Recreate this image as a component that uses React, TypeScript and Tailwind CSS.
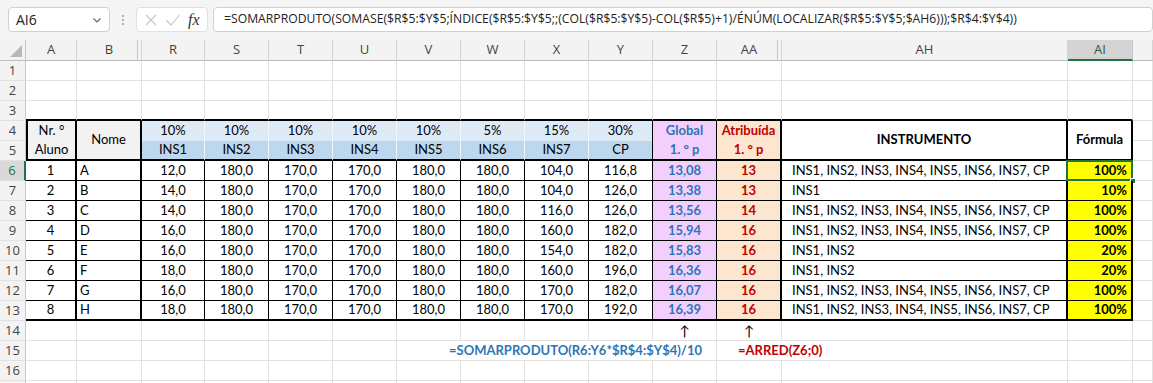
import React from 'react'
import clsx from 'clsx'

type Bd = 'g' | 't' | 'T' | 'n' | 'l'

const RB: Record<Bd, string> = {
  g: 'border-r border-r-[#e1e1e1]',
  t: 'border-r border-r-black',
  T: 'border-r-2 border-r-black',
  n: '',
  l: 'border-r border-r-[#f2f6fb]',
}
const BB: Record<Bd, string> = {
  g: 'border-b border-b-[#e1e1e1]',
  t: 'border-b border-b-black',
  T: 'border-b-2 border-b-black',
  n: '',
  l: '',
}

const ALL = 'INS1, INS2, INS3, INS4, INS5, INS6, INS7, CP'
const PCT = ['10%', '10%', '10%', '10%', '10%', '5%', '15%', '30%']
const INS = ['INS1', 'INS2', 'INS3', 'INS4', 'INS5', 'INS6', 'INS7', 'CP']
const HEADS = ['A', 'B', 'R', 'S', 'T', 'U', 'V', 'W', 'X', 'Y', 'Z', 'AA', 'AH', 'AI', '']

const DATA: [number, string, string[], string, string, string, string][] = [
  [1, 'A', ['12,0', '180,0', '170,0', '170,0', '180,0', '180,0', '104,0', '116,8'], '13,08', '13', ALL, '100%'],
  [2, 'B', ['14,0', '180,0', '170,0', '170,0', '180,0', '180,0', '104,0', '126,0'], '13,38', '13', 'INS1', '10%'],
  [3, 'C', ['14,0', '180,0', '170,0', '170,0', '180,0', '180,0', '116,0', '126,0'], '13,56', '14', ALL, '100%'],
  [4, 'D', ['16,0', '180,0', '170,0', '170,0', '180,0', '180,0', '160,0', '182,0'], '15,94', '16', ALL, '100%'],
  [5, 'E', ['16,0', '180,0', '170,0', '170,0', '180,0', '180,0', '154,0', '182,0'], '15,83', '16', 'INS1, INS2', '20%'],
  [6, 'F', ['18,0', '180,0', '170,0', '170,0', '180,0', '180,0', '160,0', '196,0'], '16,36', '16', 'INS1, INS2', '20%'],
  [7, 'G', ['16,0', '180,0', '170,0', '170,0', '180,0', '180,0', '170,0', '182,0'], '16,07', '16', ALL, '100%'],
  [8, 'H', ['18,0', '180,0', '170,0', '170,0', '180,0', '180,0', '170,0', '192,0'], '16,39', '16', ALL, '100%'],
]

function Cell({
  children,
  r = 'g',
  b = 'g',
  className = '',
}: {
  children?: React.ReactNode
  r?: Bd
  b?: Bd
  className?: string
}) {
  return (
    <div className={clsx('flex items-center whitespace-nowrap min-w-0', RB[r], BB[b], className)}>
      {children}
    </div>
  )
}

function RowHead({ n, sel }: { n?: number; sel?: boolean }) {
  return (
    <div
      className={clsx(
        "flex items-center justify-center border-b border-b-[#e1e1e1] font-['Open_Sans',sans-serif] text-[13px]",
        sel
          ? 'bg-[#d9d9d9] text-[#217346] border-r-2 border-r-[#217346]'
          : 'bg-[#f3f3f3] text-[#444] border-r border-r-[#c8c8c8]'
      )}
    >
      {n}
    </div>
  )
}

function EmptyRow({ n, bottom }: { n?: number; bottom?: boolean }) {
  return (
    <>
      <RowHead n={n} />
      {HEADS.map((h, i) => (
        <Cell key={h + i} b={bottom && i < 14 ? 'T' : 'g'} />
      ))}
    </>
  )
}

export default function App() {
  return (
    <div className="w-[1153px] h-[383px] overflow-hidden bg-white font-['Lato','Liberation_Sans',sans-serif] text-[13px] text-black">
      {/* formula bar */}
      <div className="h-[40px] bg-[#f5f5f5] flex items-start pt-[7px] pl-[8px] gap-[5px] font-['Open_Sans',sans-serif]">
        <div className="w-[102px] h-[25px] bg-white border border-[#d1d1d1] rounded-[4px] flex items-center justify-between pl-[7px] pr-[6px] text-[14px] text-[#222]">
          <span>AI6</span>
          <svg width="12" height="12" viewBox="0 0 12 12" fill="none" stroke="#666" strokeWidth="1.2">
            <path d="M2.5 4.5 L6 8 L9.5 4.5" />
          </svg>
        </div>
        <div className="w-[16px] h-[25px] flex items-center justify-center">
          <svg width="4" height="14" viewBox="0 0 4 14" fill="#9a9a9a">
            <circle cx="2" cy="3" r="1" />
            <circle cx="2" cy="7" r="1" />
            <circle cx="2" cy="11" r="1" />
          </svg>
        </div>
        <div className="w-[72px] h-[25px] bg-white border border-[#e0e0e0] rounded-[4px] flex items-center justify-around px-[4px]">
          <svg width="14" height="14" viewBox="0 0 14 14" stroke="#c4c4c4" strokeWidth="1.1">
            <path d="M2 2 L12 12 M12 2 L2 12" />
          </svg>
          <svg width="16" height="14" viewBox="0 0 16 14" fill="none" stroke="#c4c4c4" strokeWidth="1.1">
            <path d="M1.5 7.5 L6 12 L14.5 2" />
          </svg>
          <span className="font-['Liberation_Serif',serif] italic text-[16px] text-[#333] leading-none">fx</span>
        </div>
        <div className="w-[940px] h-[25px] bg-white border border-[#d1d1d1] rounded-[4px] flex items-center pl-[10px] text-[12.2px] text-[#222] whitespace-nowrap">
          =SOMARPRODUTO(SOMASE($R$5:$Y$5;ÍNDICE($R$5:$Y$5;;(COL($R$5:$Y$5)-COL($R$5)+1)/ÉNÚM(LOCALIZAR($R$5:$Y$5;$AH6)));$R$4:$Y$4))
        </div>
      </div>

      {/* sheet grid */}
      <div className="grid grid-cols-[26px_51px_65px_63px_64px_64px_64px_64px_64px_64px_64px_64px_65px_286px_65px_20px] grid-rows-[21px] auto-rows-[20px]">
        {/* column headers */}
        <div className="bg-[#f3f3f3] border-r border-r-[#c8c8c8] border-b border-b-[#bdbdbd] flex items-end justify-end p-[3px]">
          <svg width="12" height="12" viewBox="0 0 12 12">
            <polygon points="12,0 12,12 0,12" fill="#b8b8b8" />
          </svg>
        </div>
        {HEADS.map((h, i) => (
          <div
            key={h + i}
            className={clsx(
              "flex items-center justify-center font-['Open_Sans',sans-serif] text-[13px]",
              h === 'AI'
                ? 'bg-[#d4d4d4] text-[#2f5a40] border-r border-r-[#c8c8c8] border-b-2 border-b-[#217346]'
                : 'bg-[#f3f3f3] text-[#444] border-r border-r-[#d4d4d4] border-b border-b-[#bdbdbd]',
              (h === 'B' || h === 'AA') && 'shadow-[inset_-3px_0_0_0_#f3f3f3,inset_-4px_0_0_0_#c8c8c8]'
            )}
          >
            {h}
          </div>
        ))}

        <EmptyRow n={1} />
        <EmptyRow n={2} />
        <EmptyRow n={3} bottom />

        {/* row 4 */}
        <RowHead n={4} />
        <Cell r="T" b="n" className="bg-[#f2f2f2] justify-center border-l-2 border-l-black">Nr. °</Cell>
        <Cell r="T" b="T" className="row-span-2 bg-[#f2f2f2] justify-center">Nome</Cell>
        {PCT.map((p, i) => (
          <Cell key={'p' + i} r={i === 7 ? 't' : 'l'} b="n" className="bg-[#ddebf7] justify-center">
            {p}
          </Cell>
        ))}
        <Cell r="t" b="n" className="bg-[#f3cffd] justify-center font-bold text-[#2f75b5]">Global</Cell>
        <Cell r="T" b="n" className="bg-[#fde6cf] justify-center font-bold text-[#c00000]">Atribuída</Cell>
        <Cell r="T" b="T" className="row-span-2 justify-center font-bold">INSTRUMENTO</Cell>
        <Cell r="T" b="T" className="row-span-2 justify-center font-bold">Fórmula</Cell>
        <Cell />

        {/* row 5 */}
        <RowHead n={5} />
        <Cell r="T" b="T" className="bg-[#f2f2f2] justify-center border-l-2 border-l-black">Aluno</Cell>
        {INS.map((p, i) => (
          <Cell key={'i' + i} r={i === 7 ? 't' : 'l'} b="T" className="bg-[#bdd7ee] justify-center">
            {p}
          </Cell>
        ))}
        <Cell r="t" b="T" className="bg-[#f3cffd] justify-center font-bold text-[#2f75b5]">1. ° p</Cell>
        <Cell r="T" b="T" className="bg-[#fde6cf] justify-center font-bold text-[#c00000]">1. ° p</Cell>
        <Cell />

        {/* data rows */}
        {DATA.map(([n, name, vals, glob, atr, inst, pct], ri) => {
          const last = ri === DATA.length - 1
          const b: Bd = last ? 'T' : 't'
          return (
            <React.Fragment key={n}>
              <RowHead n={ri + 6} sel={ri === 0} />
              <Cell r="T" b={b} className="justify-center">{n}</Cell>
              <Cell r="T" b={b} className="pl-[3px]">{name}</Cell>
              {vals.map((v, vi) => (
                <Cell key={vi} r="t" b={b} className="justify-center">{v}</Cell>
              ))}
              <Cell r="t" b={b} className="bg-[#f3cffd] justify-center font-bold text-[#2f75b5]">{glob}</Cell>
              <Cell r="T" b={b} className="bg-[#fde6cf] justify-center font-bold text-[#c00000]">{atr}</Cell>
              <Cell r="T" b={b} className="pl-[10px]">{inst}</Cell>
              <Cell r="T" b={b} className="relative bg-[#ffff00] justify-end pr-[4px] font-bold">
                {pct}
                {ri === 0 && (
                  <>
                    <div className="absolute -left-[2px] -top-[1px] -right-[2px] -bottom-[1px] border-2 border-[#217346]" />
                    <div className="absolute -right-[5px] -bottom-[4px] w-[6px] h-[6px] bg-[#217346] border border-white" />
                  </>
                )}
              </Cell>
              <Cell />
            </React.Fragment>
          )
        })}

        {/* row 14 */}
        <RowHead n={14} />
        {HEADS.map((h, i) => (
          <Cell key={'r14' + i} className="justify-center text-[14px]">
            {h === 'Z' || h === 'AA' ? '↑' : ''}
          </Cell>
        ))}

        {/* row 15 */}
        <RowHead n={15} />
        <Cell />
        <Cell />
        <Cell />
        <Cell />
        <Cell />
        <Cell />
        <Cell className="col-span-5 pl-[52px] font-bold text-[#2f75b5]">=SOMARPRODUTO(R6:Y6*$R$4:$Y$4)/10</Cell>
        <Cell className="col-span-2 pl-[21px] font-bold text-[#c00000]">=ARRED(Z6;0)</Cell>
        <Cell />
        <Cell />

        <EmptyRow n={16} />
        <EmptyRow />
      </div>
    </div>
  )
}
